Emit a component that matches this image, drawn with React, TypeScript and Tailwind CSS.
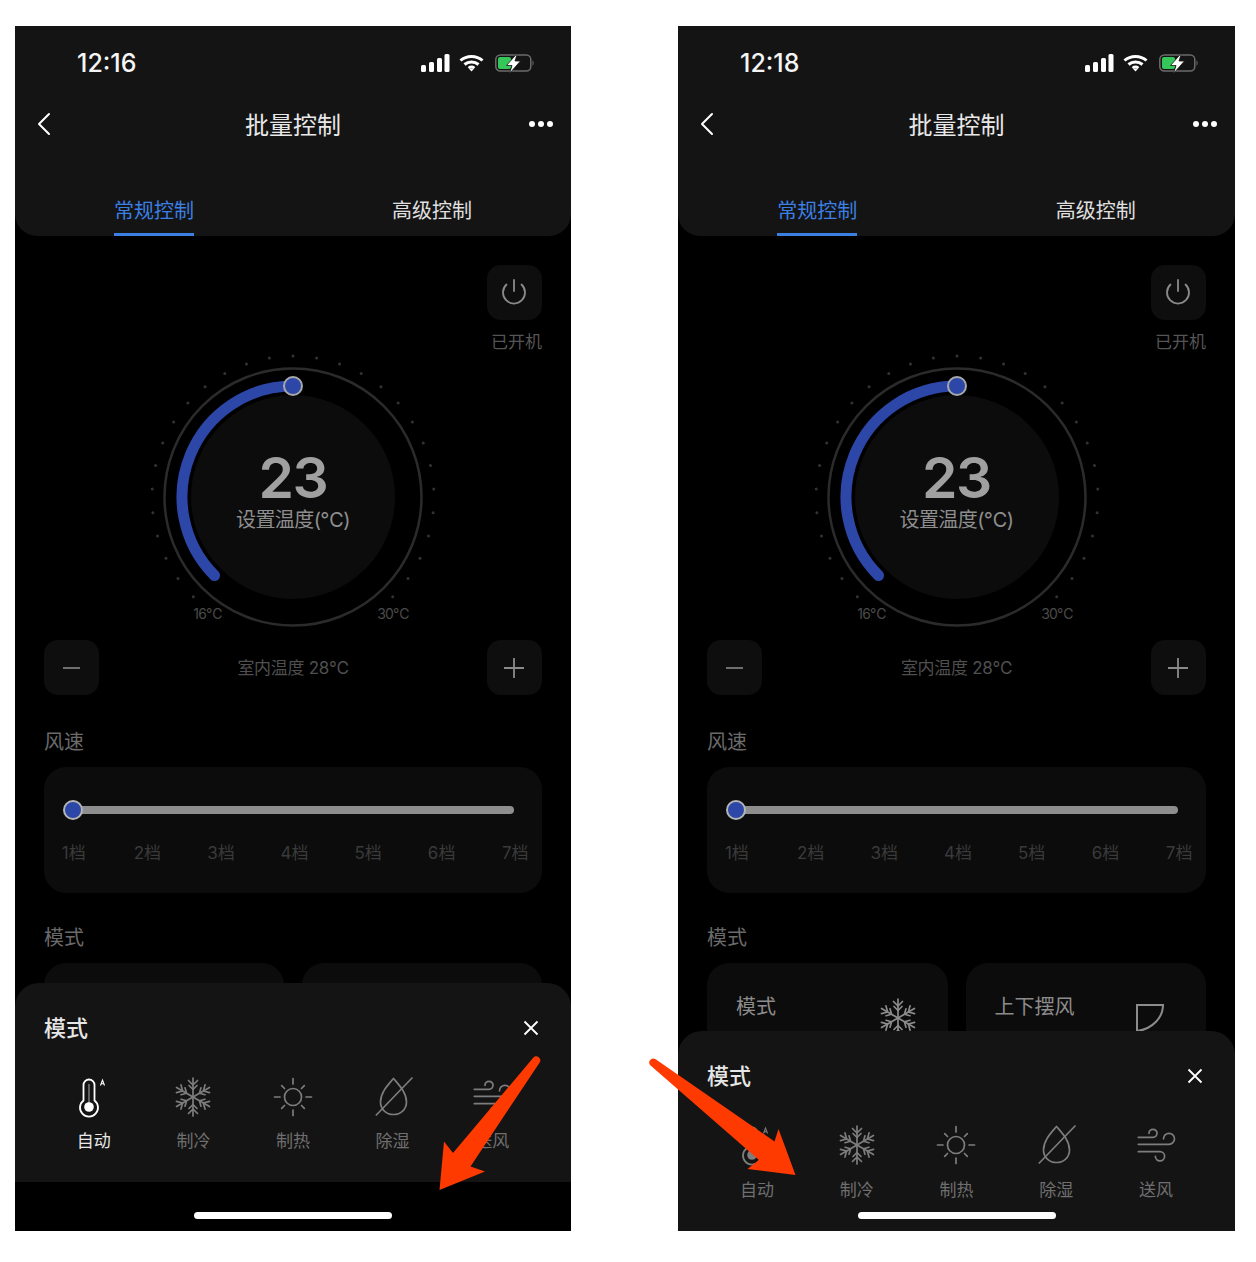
import React from "react";

const FONT = 'Inter, "Liberation Sans", "Noto Sans CJK SC", sans-serif';

function Snow({ size = 40, color = "#7d7d7d" }: { size?: number; color?: string }) {
  const arms = [0, 60, 120, 180, 240, 300];
  return (
    <svg width={size} height={size} viewBox="0 0 40 40" fill="none" stroke={color} strokeWidth="1.7" strokeLinecap="round" strokeLinejoin="round">
      {arms.map((a) => (
        <g key={a} transform={`rotate(${a} 20 20)`}>
          <path d="M20 20V1" />
          <path d="M15.500 3.500 20 8l4.500-4.500" />
          <path d="M16 8.500 20 12.500l4-4" />
        </g>
      ))}
    </svg>
  );
}

function SunIcon() {
  const rays = [0, 45, 90, 135, 180, 225, 270, 315];
  return (
    <svg width="40" height="40" viewBox="0 0 40 40" fill="none" stroke="#7d7d7d" strokeWidth="1.7" strokeLinecap="round">
      <circle cx="20" cy="20" r="8.500" />
      {rays.map((a) => (
        <path key={a} d={a % 90 === 0 ? "M20 1.500V7" : "M20 4V8"} transform={`rotate(${a} 20 20)`} />
      ))}
    </svg>
  );
}

function DropOff() {
  return (
    <svg width="40" height="40" viewBox="0 0 40 40" fill="none" stroke="#7d7d7d" strokeWidth="1.7" strokeLinecap="round" strokeLinejoin="round">
      <path d="M20.500 1.500C16 7 7.500 15 7.500 25c0 7.500 6 12.500 13 12.500S33.500 32.500 33.500 25C33.500 15 25 7 20.500 1.500Z" />
      <path d="M39 1 3.300 38" />
    </svg>
  );
}

function WindIcon() {
  return (
    <svg width="40" height="40" viewBox="0 0 40 40" fill="none" stroke="#7d7d7d" strokeWidth="1.7" strokeLinecap="round">
      <path d="M2.300 12.300H17a4 4 0 1 0-4-4" />
      <path d="M2.300 19.300H33a5.500 5.500 0 1 0-5.500-5.500" />
      <path d="M2.300 26.700H24a4.600 4.600 0 1 1-4.600 4.600" />
    </svg>
  );
}

function Thermo({ color }: { color: string }) {
  return (
    <svg width="40" height="44" viewBox="0 0 40 44" fill="none">
      <path d="M9.500 10a5.500 5.500 0 0 1 11 0V25.500a9 9 0 1 1-11 0Z" stroke={color} strokeWidth="1.800" />
      <path d="M15 9V28" stroke={color} strokeWidth="1.200" strokeOpacity="0.55" />
      <circle cx="15" cy="32" r="4.800" fill={color} />
      <path d="M26.500 10.500 28.500 5l2 5.500M27.300 8.700h2.400" stroke={color} strokeWidth="1.100" />
    </svg>
  );
}

function StatusIcons() {
  return (
    <div className="flex items-center">
      <svg width="29" height="18" viewBox="0 0 29 18" fill="#fff">
        <rect x="0" y="11" width="5" height="7" rx="1.500" />
        <rect x="8" y="8" width="5" height="10" rx="1.500" />
        <rect x="16" y="4" width="5" height="14" rx="1.500" />
        <rect x="23.500" y="0" width="5" height="18" rx="1.500" />
      </svg>
      <svg className="ml-[9px]" width="25" height="18" viewBox="0 0 25 18" fill="none" stroke="#fff" strokeWidth="3">
        <path d="M1.500 6.500C7.500 1 17.500 1 23.500 6.500" />
        <path d="M5.500 10.500c4-3.500 10-3.500 14 0" />
        <path d="M9.500 14c2-1.500 4-1.500 6 0" strokeWidth="2.500" />
        <path d="M12.500 17.500 9.800 14.500h5.400Z" fill="#fff" stroke="none" />
      </svg>
      <svg className="ml-[11px]" width="39" height="20" viewBox="0 0 39 20">
        <rect x="0.800" y="2" width="35" height="16" rx="4.500" fill="none" stroke="#6b6b6b" strokeWidth="1.500" />
        <rect x="3" y="4" width="13" height="12" rx="2" fill="#35c759" />
        <path d="M37.500 7.500c1.500.5 1.500 4.500 0 5Z" fill="#6b6b6b" />
        <path d="M22.500 0 11.500 12.500h5.500L14.500 20.500 25.500 8h-5.500Z" fill="#fff" stroke="#141414" strokeWidth="0.800" />
      </svg>
    </div>
  );
}

function Dial() {
  const dots = Array.from({ length: 29 }, (_, i) => {
    const a = ((-135 + (270 / 28) * i) * Math.PI) / 180;
    return { x: 150 + 141 * Math.sin(a), y: 144 - 141 * Math.cos(a) };
  });
  const ax = 150 - 111 * Math.sin(Math.PI / 4);
  const ay = 144 + 111 * Math.cos(Math.PI / 4);
  return (
    <div className="relative h-[287px] flex justify-center">
      <svg width="300" height="287" viewBox="0 0 300 287" className="overflow-visible">
        {dots.map((d, i) => (
          <circle key={i} cx={d.x} cy={d.y} r="1.500" fill="#333333" />
        ))}
        <circle cx="150" cy="144" r="128.500" fill="none" stroke="#2b2b2b" strokeWidth="2.500" />
        <circle cx="150" cy="144" r="102" fill="#0c0c0c" />
        <path d={`M${ax} ${ay}A111 111 0 0 1 150 33`} fill="none" stroke="#2c47a8" strokeWidth="11" strokeLinecap="round" />
        <circle cx="150" cy="33" r="9" fill="#2c47a8" stroke="#a8a8a8" strokeWidth="2" />
        <text x="64.500" y="266" textAnchor="middle" fontSize="14" letterSpacing="-0.800" fill="#4a4a4a" fontFamily={FONT}>16℃</text>
        <text x="250" y="266" textAnchor="middle" fontSize="14" letterSpacing="-0.800" fill="#4a4a4a" fontFamily={FONT}>30℃</text>
      </svg>
      <div className="absolute left-0 right-0 top-[102px] flex flex-col items-center">
        <div className="text-[57px] leading-[46px] font-semibold tracking-[-1.500px] text-[#a0a0a0]">23</div>
        <div className="text-[20px] leading-[28px] tracking-[-0.600px] text-[#8e8e8e] mt-[5px]">设置温度(℃)</div>
      </div>
    </div>
  );
}

function Sheet({ active, topClass }: { active: boolean; topClass: string }) {
  const items: [string, React.ReactNode][] = [
    ["自动", <Thermo color={active ? "#ffffff" : "#7d7d7d"} />],
    ["制冷", <Snow />],
    ["制热", <SunIcon />],
    ["除湿", <DropOff />],
    ["送风", <WindIcon />],
  ];
  return (
    <div className={`absolute left-0 right-0 bg-[#141414] rounded-t-[24px] px-[29px] pt-[29px] ${topClass}`}>
      <div className="flex items-center justify-between h-[32px]">
        <span className="text-[22px] font-medium text-[#e6e6e6]">模式</span>
        <svg width="18" height="18" viewBox="0 0 18 18" fill="none" stroke="#fff" strokeWidth="1.800" className="mr-[2px]">
          <path d="M2.500 2.500l13 13M15.500 2.500l-13 13" />
        </svg>
      </div>
      <div className="grid grid-cols-5 mt-[33px]">
        {items.map(([label, icon], i) => (
          <div key={label} className="flex flex-col items-center">
            <div className="h-[40px] flex items-center justify-center">{icon}</div>
            <div className={`${active ? "mt-[12px]" : "mt-[13px]"} text-[17px] leading-[24px] ${active && i === 0 ? "text-[#e8e8e8]" : "text-[#6f6f6f]"}`}>{label}</div>
          </div>
        ))}
      </div>
    </div>
  );
}

function Phone({ time, active, widthClass, sheetClass }: { time: string; active: boolean; widthClass: string; sheetClass: string }) {
  return (
    <div className={`relative h-[1205px] bg-black overflow-hidden ${widthClass}`}>
      <div className="h-[210px] bg-[#141414] rounded-b-[22px]">
        <div className="h-[78px] pt-[22px] pl-[62px] pr-[37px]">
          <div className="flex items-center justify-between h-[30px]">
            <span className="text-[25px] leading-[32px] font-medium text-[#f5f5f5]">{time}</span>
            <StatusIcons />
          </div>
        </div>
        <div className="relative h-[40px] flex items-center justify-between pl-[22px] pr-[18px]">
          <svg width="14" height="24" viewBox="0 0 14 24" fill="none" stroke="#fff" strokeWidth="2" strokeLinecap="round" strokeLinejoin="round">
            <path d="M12 2 2 12l10 10" />
          </svg>
          <span className="absolute left-0 right-0 text-center text-[24px] leading-[40px] pt-[4px] text-[#e8e8e8]">批量控制</span>
          <div className="flex gap-[3px]">
            <span className="w-[6px] h-[6px] rounded-full bg-white" />
            <span className="w-[6px] h-[6px] rounded-full bg-white" />
            <span className="w-[6px] h-[6px] rounded-full bg-white" />
          </div>
        </div>
        <div className="grid grid-cols-2 h-[50px] mt-[42px] text-[20px] leading-[28px]">
          <div className="flex justify-center">
            <span className="pt-[11px] pb-[8px] border-b-[3px] border-[#3b7fe3] text-[#3b7fe3]">常规控制</span>
          </div>
          <div className="flex justify-center">
            <span className="pt-[11px] text-[#e0e0e0]">高级控制</span>
          </div>
        </div>
      </div>

      <div className="px-[29px] pt-[29px]">
        <div className="flex flex-col items-end">
          <div className="w-[55px] h-[55px] rounded-[14px] bg-[#0e0e0e] flex items-center justify-center">
            <svg className="mt-[-2px] ml-[-1px]" width="26" height="26" viewBox="0 0 26 26" fill="none" stroke="#8a8a8a" strokeWidth="1.800" strokeLinecap="round">
              <path d="M13 1V12" />
              <path d="M5.500 5.500A11 11 0 1 0 20.500 5.500" />
            </svg>
          </div>
          <div className="mt-[10px] h-[23px] text-[17px] leading-[24px] text-[#555555]">已开机</div>
        </div>

        <Dial />

        <div className="flex items-center justify-between h-[55px]">
          <div className="w-[55px] h-[55px] rounded-[14px] bg-[#0e0e0e] flex items-center justify-center">
            <svg width="18" height="2" viewBox="0 0 18 2"><rect width="17" height="2" fill="#6e6e6e" /></svg>
          </div>
          <div className="pt-[2px] text-[17px] tracking-[-0.300px] text-[#4f4f4f]">室内温度 28℃</div>
          <div className="w-[55px] h-[55px] rounded-[14px] bg-[#0e0e0e] flex items-center justify-center">
            <svg className="ml-[-1px]" width="20" height="20" viewBox="0 0 20 20" stroke="#8a8a8a" strokeWidth="1.800"><path d="M0 10h20M10 0v20" /></svg>
          </div>
        </div>

        <div className="mt-[33px] text-[20px] leading-[28px] text-[#6a6a6a]">风速</div>
        <div className="mt-[11px] h-[126px] rounded-[22px] bg-[#0c0c0c] pt-[39px]">
          <div className="relative mx-[28px] h-[8px] rounded-full bg-[#8e8e8e]">
            <span className="absolute left-[-9px] top-[-6px] w-[20px] h-[20px] rounded-full bg-[#2c47a8] border-2 border-[#b4b4b4]" />
          </div>
          <div className="grid grid-cols-7 ml-[-7px] mr-[-10px] mt-[28px] text-center text-[17px] leading-[22px] text-[#3a3a3a]">
            {["1档", "2档", "3档", "4档", "5档", "6档", "7档"].map((t) => (
              <span key={t}>{t}</span>
            ))}
          </div>
        </div>

        <div className="mt-[31px] text-[20px] leading-[28px] text-[#6a6a6a]">模式</div>
        <div className="mt-[11px] grid grid-cols-2 gap-[18px]">
          <div className="h-[150px] rounded-[22px] bg-[#0c0c0c] pl-[29px] pr-[30px] pt-[30px] flex justify-between">
            <span className="text-[20px] leading-[28px] text-[#8c8c8c]">模式</span>
            <div className="mt-[5px]"><Snow color="#8c8c8c" /></div>
          </div>
          <div className="h-[150px] rounded-[22px] bg-[#0c0c0c] pl-[29px] pr-[41px] pt-[30px] flex justify-between">
            <span className="text-[20px] leading-[28px] text-[#8c8c8c]">上下摆风</span>
            <svg className="mt-[10px]" width="30" height="30" viewBox="0 0 30 30" fill="none" stroke="#8c8c8c" strokeWidth="2">
              <path d="M2 2h26c0 12-10 24-26 26Z" />
            </svg>
          </div>
        </div>
      </div>

      <Sheet active={active} topClass={sheetClass} />
      <div className="absolute left-0 right-0 bottom-[12px] flex justify-center">
        <span className="w-[198px] h-[7px] rounded-full bg-white" />
      </div>
    </div>
  );
}

export default function App() {
  return (
    <div className="relative w-[1256px] h-[1262px] bg-white pt-[26px] pl-[15px] flex gap-[107px]" style={{ fontFamily: FONT }}>
      <Phone time="12:16" active widthClass="w-[556px]" sheetClass="top-[957px] h-[199px]" />
      <Phone time="12:18" active={false} widthClass="w-[557px]" sheetClass="top-[1005px] h-[200px]" />
      <svg className="absolute left-0 top-0 pointer-events-none" width="1256" height="1262" viewBox="0 0 1256 1262">
        <path
          d="M533 1058c2-3 6-2 7 1 .5 1 .5 2 0 3L470.500 1166.500 485 1171.500 439.500 1190 444 1141.500 453 1153Z"
          fill="#ff3a00"
        />
        <path
          d="M650 1065c-2-3 0-6 3-6.500 1 0 2 .5 3 1L774.500 1141.500 778.500 1129 795.500 1175 747.500 1169 759 1160Z"
          fill="#ff3a00"
        />
      </svg>
    </div>
  );
}
